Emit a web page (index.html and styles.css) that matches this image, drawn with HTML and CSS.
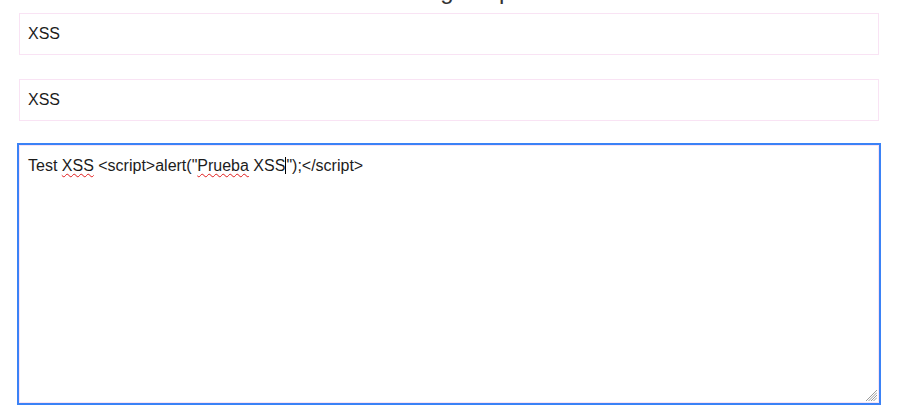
FILE: index.html
```html
<!DOCTYPE html>
<html lang="es">
<head>
<meta charset="utf-8">
<title>Formulario</title>
<link rel="stylesheet" href="styles.css">
</head>
<body>
<div class="page">
  <h1 class="title">Blog del post</h1>
  <form class="form">
    <div class="field">XSS</div>
    <div class="field">XSS</div>
    <div class="area">
      <div class="area-text">Test <span class="misspelled">XSS</span> &lt;script&gt;alert("<span class="misspelled">Prueba</span> XSS<span class="caret"></span>");&lt;/script&gt;</div>
      <svg class="resizer" width="11" height="11" viewBox="0 0 11 11">
        <g stroke="#9a9a9a" stroke-width="1">
          <line x1="11" y1="0" x2="0" y2="11"/>
          <line x1="11" y1="2.5" x2="2.5" y2="11"/>
          <line x1="11" y1="5" x2="5" y2="11"/>
          <line x1="11" y1="7.5" x2="7.5" y2="11"/>
        </g>
      </svg>
    </div>
  </form>
</div>
</body>
</html>
```
FILE: styles.css
```css
html, body {
  margin: 0;
  padding: 0;
  background: #ffffff;
}

body {
  font-family: "Liberation Sans", Arial, sans-serif;
  color: #222222;
}

.page {
  width: 860px;
  padding: 0 0 12px 19px;
}

.title {
  margin: -23px 0 0 0;
  padding-left: 52px;
  font-size: 24px;
  line-height: 28px;
  font-weight: normal;
  text-align: center;
  color: #333333;
}

.form {
  display: flex;
  flex-direction: column;
  gap: 24px;
  margin: 8px 0 0 0;
}

.field {
  box-sizing: border-box;
  height: 42px;
  border: 1px solid #f9e3f4;
  padding: 0 8px;
  font-size: 16px;
  line-height: 40px;
  color: #1c1c1c;
}

.area {
  position: relative;
  box-sizing: border-box;
  height: 258px;
  border: 1px solid #f9e3f4;
  box-shadow: 0 0 0 2px #3b82f6;
  padding: 8px;
  font-size: 16px;
  line-height: 24px;
  color: #1c1c1c;
}

.area-text {
  white-space: pre-wrap;
}

.misspelled {
  text-decoration: underline wavy #e01b1b;
  text-decoration-thickness: 1px;
  text-underline-offset: 2px;
  text-decoration-skip-ink: none;
}

.caret {
  display: inline-block;
  width: 0;
  height: 17px;
  border-left: 1px solid #000000;
  vertical-align: -3px;
}

.resizer {
  position: absolute;
  right: 1px;
  bottom: 1px;
}
```
